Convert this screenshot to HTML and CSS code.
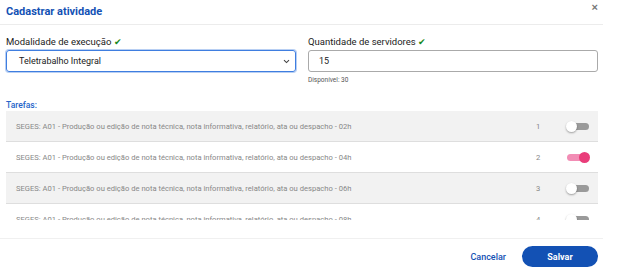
FILE: index.html
```html
<!DOCTYPE html>
<html lang="pt-BR">
<head>
    <meta charset="UTF-8">
    <title>Cadastrar atividade</title>
    <link rel="stylesheet" href="styles.css">
</head>
<body>
    <div class="modal">
        <div class="modal-header">
            <h2 class="modal-title">Cadastrar atividade</h2>
            <button class="close-btn">&times;</button>
        </div>

        <div class="modal-body">
            <div class="fields">
                <div class="field">
                    <label class="field-label">Modalidade de execução <span class="check">&#10004;</span></label>
                    <div class="select-box">
                        <span>Teletrabalho Integral</span>
                        <svg class="chevron" width="7" height="5" viewBox="0 0 7 5"><path d="M1 1.2 L3.5 3.6 L6 1.2" fill="none" stroke="#444" stroke-width="1.1"/></svg>
                    </div>
                </div>
                <div class="field">
                    <label class="field-label">Quantidade de servidores <span class="check">&#10004;</span></label>
                    <div class="text-box">15</div>
                    <div class="hint">Disponível: 30</div>
                </div>
            </div>

            <div class="tasks-title">Tarefas:</div>
            <div class="tasks">
                <div class="task-row grey">
                    <span class="task-name">SEGES: A01 - Produção ou edição de nota técnica, nota informativa, relatório, ata ou despacho - 02h</span>
                    <span class="task-num">1</span>
                    <span class="toggle"></span>
                </div>
                <div class="task-row">
                    <span class="task-name">SEGES: A01 - Produção ou edição de nota técnica, nota informativa, relatório, ata ou despacho - 04h</span>
                    <span class="task-num">2</span>
                    <span class="toggle on"></span>
                </div>
                <div class="task-row grey">
                    <span class="task-name">SEGES: A01 - Produção ou edição de nota técnica, nota informativa, relatório, ata ou despacho - 06h</span>
                    <span class="task-num">3</span>
                    <span class="toggle"></span>
                </div>
                <div class="task-row">
                    <span class="task-name">SEGES: A01 - Produção ou edição de nota técnica, nota informativa, relatório, ata ou despacho - 08h</span>
                    <span class="task-num">4</span>
                    <span class="toggle"></span>
                </div>
            </div>
        </div>

        <div class="modal-footer">
            <button class="btn-cancel">Cancelar</button>
            <button class="btn-save">Salvar</button>
        </div>
    </div>
</body>
</html>
```

FILE: styles.css
```css
body {
    margin: 0;
    font-family: Roboto, "Liberation Sans", sans-serif;
    background: #fff;
}

.modal {
    width: 603px;
}

.modal-header {
    display: flex;
    justify-content: space-between;
    align-items: flex-start;
    height: 25px;
    padding: 0 6px;
    border-bottom: 1px solid #ececec;
    box-sizing: border-box;
}

.modal-title {
    margin: 0;
    padding-top: 5px;
    font-size: 11px;
    font-weight: 700;
    color: #1351b4;
}

.close-btn {
    border: none;
    background: none;
    padding: 0;
    margin-top: 1px;
    margin-right: -1px;
    font-size: 11px;
    color: #777;
    font-weight: 700;
    cursor: pointer;
}

.modal-body {
    padding: 0 5px 0 6px;
}

.fields {
    display: flex;
    gap: 12px;
    padding-top: 11px;
}

.field {
    flex: 1;
}

.field-label {
    display: block;
    font-size: 9.5px;
    color: #222;
    height: 14px;
}

.check {
    color: #168821;
    font-size: 9px;
}

.select-box,
.text-box {
    height: 22px;
    box-sizing: border-box;
    border-radius: 3px;
    display: flex;
    align-items: center;
    font-size: 9px;
    color: #222;
}

.select-box {
    border: 1px solid #3f7ee0;
    box-shadow: 0 0 0 1px #b8cff3;
    padding: 0 5px 0 12px;
    justify-content: space-between;
}

.text-box {
    border: 1px solid #aaa;
    padding: 0 10px;
}

.hint {
    margin-top: 4px;
    font-size: 6.5px;
    color: #555;
}

.tasks-title {
    margin-top: 16px;
    font-size: 8.5px;
    font-weight: 500;
    color: #2563c9;
    height: 11px;
}

.tasks {
    height: 109px;
    overflow: hidden;
}

.task-row {
    display: flex;
    align-items: center;
    height: 31px;
    box-sizing: border-box;
    padding: 0 9px 0 10px;
    border-bottom: 1px solid #dedede;
    font-size: 7.6px;
    color: #888;
}

.task-row.grey {
    background: #f2f2f2;
}

.task-name {
    flex: 1;
}

.task-num {
    width: 31px;
}

.toggle {
    position: relative;
    width: 22px;
    height: 7px;
    border-radius: 4px;
    background: #9a9a9a;
}

.toggle::after {
    content: "";
    position: absolute;
    left: -1px;
    top: -2px;
    width: 11px;
    height: 11px;
    border-radius: 50%;
    background: #fff;
    box-shadow: 0 1px 2px rgba(0, 0, 0, 0.35);
}

.toggle.on {
    background: #f28db5;
}

.toggle.on::after {
    left: auto;
    right: -1px;
    background: #e93d7a;
    box-shadow: none;
}

.modal-footer {
    display: flex;
    justify-content: flex-end;
    align-items: center;
    gap: 16px;
    margin-top: 18px;
    border-top: 1px solid #f0f0f0;
    padding: 7px 5px 0 0;
}

.btn-cancel {
    border: none;
    background: none;
    padding: 0;
    font-family: inherit;
    font-size: 9px;
    font-weight: 500;
    color: #1351b4;
    cursor: pointer;
}

.btn-save {
    width: 76px;
    height: 21px;
    border: none;
    border-radius: 11px;
    background: #1351b4;
    color: #fff;
    font-family: inherit;
    font-size: 9px;
    font-weight: 700;
    cursor: pointer;
}
```
